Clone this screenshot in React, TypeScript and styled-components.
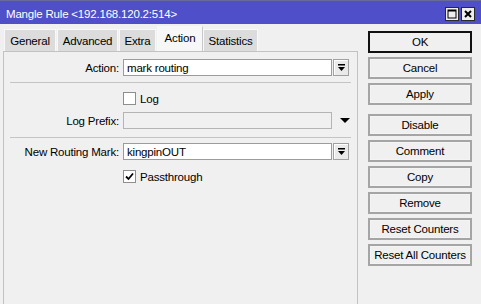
import React from 'react';
import styled, { createGlobalStyle } from 'styled-components';

const GlobalStyle = createGlobalStyle`
  html, body {
    margin: 0;
    padding: 0;
    background: #f0f0f0;
  }
  body {
    font-family: "Liberation Sans", Arial, sans-serif;
    font-size: 11px;
    color: #000;
  }
`;

const Window = styled.div`
  width: 481px;
  height: 304px;
  box-sizing: border-box;
  background: #f0f0f0;
  border-top: 1px solid #6a6a9a;
  display: flex;
  flex-direction: column;
  overflow: hidden;
`;

const TitleBar = styled.div`
  height: 23px;
  background: #4f4fc9;
  display: flex;
  align-items: center;
  justify-content: space-between;
  padding: 0 6px 0 6px;
  color: #fff;
  font-size: 11.5px;
`;

const TitleText = styled.span`
  letter-spacing: -0.2px;
  padding-top: 2px;
`;

const TitleButtons = styled.div`
  display: flex;
  gap: 2px;
  margin-top: 2px;
`;

const TitleButton = styled.div`
  width: 12px;
  height: 12px;
  border: 1px solid #2a2a2a;
  background: #eeeeee;
  display: flex;
  align-items: center;
  justify-content: center;
`;

const Body = styled.div`
  flex: 1;
  display: flex;
  padding: 2px 0 0 3px;
`;

const LeftColumn = styled.div`
  width: 355px;
  display: flex;
  flex-direction: column;
`;

const TabStrip = styled.div`
  display: flex;
  align-items: flex-end;
  height: 25px;
  padding-left: 1px;
`;

const Tab = styled.div<{ $active?: boolean; $w: number }>`
  width: ${p => p.$w}px;
  height: ${p => (p.$active ? 25 : 22)}px;
  box-sizing: border-box;
  display: flex;
  align-items: center;
  justify-content: center;
  padding-bottom: ${p => (p.$active ? 3 : 0)}px;
  background: ${p => (p.$active ? '#f7f7f7' : '#dcdcdc')};
  border: 1px solid #f8f8f8;
  border-bottom: none;
  border-right-color: ${p => (p.$active ? '#c8c8c8' : '#f8f8f8')};
  margin-right: ${p => (p.$active ? 0 : 1)}px;
  font-size: 11.5px;
  letter-spacing: -0.2px;
`;

const Panel = styled.div`
  flex: 1;
  border: 1px solid #c2c2c2;
  border-bottom: none;
  background: #f0f0f0;
  padding: 7px 0 0 0;
  display: flex;
  flex-direction: column;
`;

const Row = styled.div<{ $mt?: number }>`
  display: flex;
  align-items: center;
  height: 17px;
  margin-top: ${p => p.$mt ?? 0}px;
`;

const Label = styled.div`
  width: 115px;
  text-align: right;
  padding-right: 4px;
  font-size: 11.5px;
  letter-spacing: -0.2px;
  white-space: nowrap;
`;

const Input = styled.div<{ $disabled?: boolean }>`
  width: 209px;
  height: 17px;
  box-sizing: border-box;
  border: 1px solid ${p => (p.$disabled ? '#b4b4b4' : '#9c9c9c')};
  background: ${p => (p.$disabled ? '#f0f0f0' : '#ffffff')};
  padding-left: 3px;
  display: flex;
  align-items: center;
  font-size: 11.5px;
  letter-spacing: -0.2px;
`;

const DropButton = styled.div`
  width: 16px;
  height: 17px;
  box-sizing: border-box;
  margin-left: 1px;
  border: 1px solid #a0a0a0;
  box-shadow: inset 1px 1px 0 #ffffff;
  background: #eaeaea;
  display: flex;
  align-items: center;
  justify-content: center;
`;

const PlainArrow = styled.div`
  width: 16px;
  margin-left: 5px;
  display: flex;
  align-items: center;
  justify-content: center;
`;

const Separator = styled.div<{ $mt: number }>`
  height: 1px;
  background: #c4c4c4;
  margin: ${p => p.$mt}px 6px 0 6px;
`;

const CheckRow = styled.label<{ $mt: number }>`
  display: flex;
  align-items: center;
  margin-top: ${p => p.$mt}px;
  margin-left: 119px;
  height: 13px;
  font-size: 11.5px;
  letter-spacing: -0.2px;
`;

const CheckBox = styled.div`
  width: 13px;
  height: 13px;
  box-sizing: border-box;
  border: 1px solid #8e8e8e;
  background: #fff;
  margin-right: 4px;
  display: flex;
  align-items: center;
  justify-content: center;
`;

const ButtonColumn = styled.div`
  display: flex;
  flex-direction: column;
  gap: 4px;
  margin-left: 10px;
  padding-top: 5px;
  width: 104px;
`;

const Button = styled.div<{ $default?: boolean; $mt?: number }>`
  height: 22px;
  box-sizing: border-box;
  border: ${p => (p.$default ? '2px solid #111' : '2px solid #a5a5a5')};
  background: #f0f0f0;
  box-shadow: ${p => (p.$default ? 'none' : 'inset 0 0 0 1px #f4f4f4')};
  display: flex;
  align-items: center;
  justify-content: center;
  margin-top: ${p => p.$mt ?? 0}px;
  font-size: 11.5px;
  letter-spacing: -0.2px;
`;

const ComboIcon = () => (
  <svg width="9" height="8" viewBox="0 0 9 8">
    <rect x="1" y="0" width="7" height="1.5" fill="#000" />
    <polygon points="1,3 8,3 4.5,7" fill="#000" />
  </svg>
);

const DownArrow = () => (
  <svg width="10" height="6" viewBox="0 0 10 6">
    <polygon points="0,0 10,0 5,5" fill="#000" />
  </svg>
);

const Tick = () => (
  <svg width="9" height="9" viewBox="0 0 9 9">
    <path d="M1 4.5 L3.5 7 L8 1.5" stroke="#000" strokeWidth="1.8" fill="none" />
  </svg>
);

const tabs = [
  { name: 'General', w: 52 },
  { name: 'Advanced', w: 61 },
  { name: 'Extra', w: 37 },
  { name: 'Action', w: 46, active: true },
  { name: 'Statistics', w: 55 },
];

const buttons = ['OK', 'Cancel', 'Apply', 'Disable', 'Comment', 'Copy', 'Remove', 'Reset Counters', 'Reset All Counters'];

export default function App() {
  return (
    <>
      <GlobalStyle />
      <Window>
        <TitleBar>
          <TitleText>Mangle Rule &lt;192.168.120.2:514&gt;</TitleText>
          <TitleButtons>
            <TitleButton>
              <svg width="10" height="10" viewBox="0 0 10 10">
                <rect x="1" y="1" width="8" height="8" fill="none" stroke="#000" strokeWidth="1" />
                <rect x="1" y="1" width="8" height="1.5" fill="#000" />
              </svg>
            </TitleButton>
            <TitleButton>
              <svg width="10" height="10" viewBox="0 0 10 10">
                <path d="M2 2 L8 8 M8 2 L2 8" stroke="#000" strokeWidth="2" />
              </svg>
            </TitleButton>
          </TitleButtons>
        </TitleBar>
        <Body>
          <LeftColumn>
            <TabStrip>
              {tabs.map(t => (
                <Tab key={t.name} $w={t.w} $active={t.active}>
                  {t.name}
                </Tab>
              ))}
            </TabStrip>
            <Panel>
              <Row>
                <Label>Action:</Label>
                <Input>mark routing</Input>
                <DropButton>
                  <ComboIcon />
                </DropButton>
              </Row>
              <Separator $mt={6} />
              <CheckRow $mt={9}>
                <CheckBox />
                Log
              </CheckRow>
              <Row $mt={7}>
                <Label>Log Prefix:</Label>
                <Input $disabled />
                <PlainArrow>
                  <DownArrow />
                </PlainArrow>
              </Row>
              <Separator $mt={8} />
              <Row $mt={5}>
                <Label>New Routing Mark:</Label>
                <Input>kingpinOUT</Input>
                <DropButton>
                  <ComboIcon />
                </DropButton>
              </Row>
              <CheckRow $mt={10}>
                <CheckBox>
                  <Tick />
                </CheckBox>
                Passthrough
              </CheckRow>
            </Panel>
          </LeftColumn>
          <ButtonColumn>
            {buttons.map((b, i) => (
              <Button key={b} $default={i === 0} $mt={i === 3 ? 5 : 0}>
                {b}
              </Button>
            ))}
          </ButtonColumn>
        </Body>
      </Window>
    </>
  );
}
